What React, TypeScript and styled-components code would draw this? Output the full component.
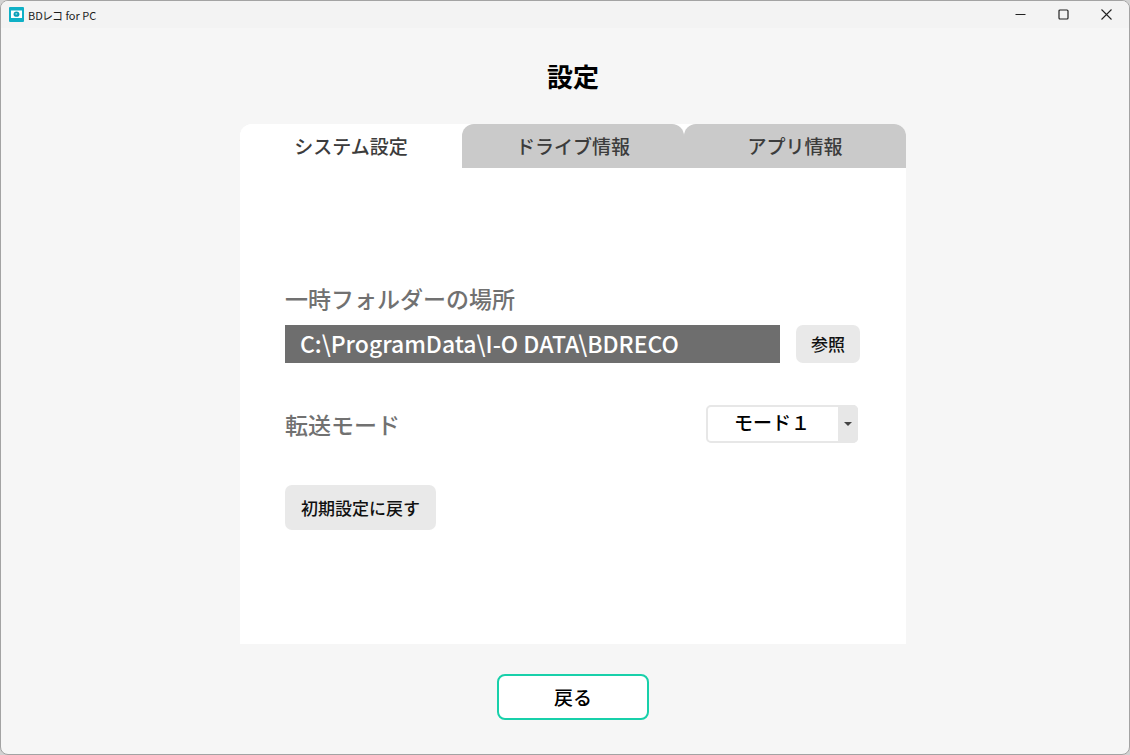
import { useState } from "react";
import styled, { createGlobalStyle } from "styled-components";

const GlobalStyle = createGlobalStyle`
  *, *::before, *::after { box-sizing: border-box; }
  body { margin: 0; background: #d2d2d2; }
  body, button, input, select {
    font-family: "Noto Sans CJK JP", sans-serif;
    font-weight: 500;
  }
  button { border: 0; padding: 0; cursor: pointer; }
`;

const AppWindow = styled.div`
  min-height: 100vh;
  display: flex;
  flex-direction: column;
  background: #f6f6f6;
  border: 1px solid #a3a3a3;
  border-radius: 8px;
  overflow: hidden;
`;

const TitleBar = styled.header`
  display: flex;
  align-items: center;
  height: 27px;
  padding: 0 1px 0 8px;
  background: #f3f3f3;
`;

const AppName = styled.span`
  flex: 1;
  padding-left: 4px;
  font-size: 11px;
  font-weight: 400;
  font-feature-settings: "palt";
  line-height: 16px;
  color: #1c1c1c;
`;

const WindowButton = styled.button`
  display: grid;
  place-items: center;
  width: 43px;
  height: 27px;
  background: transparent;
`;

const Content = styled.main`
  display: flex;
  flex-direction: column;
  align-items: center;
  padding: 29px 0 34px 16px;
`;

const Heading = styled.h1`
  margin: 0 0 29px;
  font-size: 26px;
  font-weight: 700;
  line-height: 38px;
  color: #000;
`;

const Card = styled.section`
  width: 100%;
  max-width: 666px;
  background: #fff;
  border-radius: 12px 12px 0 0;
`;

const TabList = styled.div`
  display: flex;
`;

const Tab = styled.button<{ $active: boolean }>`
  flex: 1;
  height: 44px;
  border-radius: 12px 12px 0 0;
  background: ${(p) => (p.$active ? "#fff" : "#cacaca")};
  color: #3c3c3c;
  font-size: 19px;
  line-height: 28px;
`;

const Panel = styled.div`
  display: flex;
  flex-direction: column;
  align-items: stretch;
  padding: 113px 46px 114px 45px;
`;

const Label = styled.label`
  font-size: 23px;
  line-height: 34px;
  color: #717171;
`;

const Row = styled.div`
  display: flex;
  align-items: center;
  justify-content: space-between;
  gap: 16px;
`;

const FolderRow = styled(Row)`
  margin: 10px 0 42px;
`;

const ModeRow = styled(Row)`
  margin-bottom: 42px;
  padding-right: 2px;
`;

const PathInput = styled.input`
  flex: 1;
  min-width: 0;
  height: 38px;
  padding: 0 15px 2px;
  border: 0;
  background: #6e6e6e;
  color: #fff;
  font-size: 23px;
`;

const GrayButton = styled.button<{ $large?: boolean }>`
  align-self: flex-start;
  width: ${(p) => (p.$large ? "151px" : "64px")};
  height: ${(p) => (p.$large ? "45px" : "38px")};
  border-radius: 7px;
  background: #e9e9e9;
  color: #111;
  font-size: 17px;
  line-height: 24px;
`;

const SelectBox = styled.div`
  position: relative;
  width: 152px;
  height: 38px;
`;

const ModeSelect = styled.select`
  appearance: none;
  width: 100%;
  height: 100%;
  padding: 0 20px 5px 0;
  border: 2px solid #e7e7e7;
  border-radius: 5px;
  background: #fff;
  color: #000;
  font-size: 19px;
  text-align: center;
  text-align-last: center;
`;

const SelectArrow = styled.span`
  position: absolute;
  top: 0;
  right: 0;
  bottom: 0;
  width: 20px;
  display: grid;
  place-items: center;
  border-radius: 0 5px 5px 0;
  background: #e7e7e7;
  pointer-events: none;
`;

const BackButton = styled.button`
  width: 152px;
  height: 46px;
  margin-top: 30px;
  border: 2px solid #18d0aa;
  border-radius: 8px;
  background: #fff;
  color: #000;
  font-size: 19px;
  line-height: 28px;
`;

const tabs = ["システム設定", "ドライブ情報", "アプリ情報"];

export default function App() {
  const [active, setActive] = useState(0);

  return (
    <>
      <GlobalStyle />
      <AppWindow>
        <TitleBar>
          <svg width="15" height="15" viewBox="0 0 15 15" aria-hidden="true">
            <rect width="15" height="15" rx="1" fill="#0fb0c6" />
            <path d="M2 3.5h11v7.5H2z" fill="#fff" />
            <ellipse cx="7.5" cy="7.2" rx="2.9" ry="2.6" fill="#0b9fb8" />
            <ellipse cx="7.3" cy="6.9" rx="1" ry="0.8" fill="#8fd6e0" />
          </svg>
          <AppName>BDレコ for PC</AppName>
          <WindowButton aria-label="最小化">
            <svg width="11" height="11" viewBox="0 0 11 11" stroke="#222" fill="none">
              <path d="M0.5 5.5h10" />
            </svg>
          </WindowButton>
          <WindowButton aria-label="最大化">
            <svg width="11" height="11" viewBox="0 0 11 11" stroke="#222" fill="none" strokeWidth="1.2">
              <rect x="1" y="1" width="9" height="9" rx="1" />
            </svg>
          </WindowButton>
          <WindowButton aria-label="閉じる">
            <svg width="11" height="11" viewBox="0 0 11 11" stroke="#222" fill="none" strokeWidth="1.1">
              <path d="M0.5 0.5l10 10M10.5 0.5l-10 10" />
            </svg>
          </WindowButton>
        </TitleBar>
        <Content>
          <Heading>設定</Heading>
          <Card>
            <TabList role="tablist">
              {tabs.map((name, i) => (
                <Tab
                  key={name}
                  role="tab"
                  aria-selected={active === i}
                  $active={active === i}
                  onClick={() => setActive(i)}
                >
                  {name}
                </Tab>
              ))}
            </TabList>
            <Panel role="tabpanel">
              <Label htmlFor="folder">一時フォルダーの場所</Label>
              <FolderRow>
                <PathInput id="folder" readOnly value={"C:\\ProgramData\\I-O DATA\\BDRECO"} />
                <GrayButton>参照</GrayButton>
              </FolderRow>
              <ModeRow>
                <Label htmlFor="mode">転送モード</Label>
                <SelectBox>
                  <ModeSelect id="mode">
                    <option>モード１</option>
                  </ModeSelect>
                  <SelectArrow>
                    <svg width="8" height="4" viewBox="0 0 8 4" aria-hidden="true">
                      <path d="M0 0h8L4 4z" fill="#444" />
                    </svg>
                  </SelectArrow>
                </SelectBox>
              </ModeRow>
              <GrayButton $large>初期設定に戻す</GrayButton>
            </Panel>
          </Card>
          <BackButton>戻る</BackButton>
        </Content>
      </AppWindow>
    </>
  );
}
